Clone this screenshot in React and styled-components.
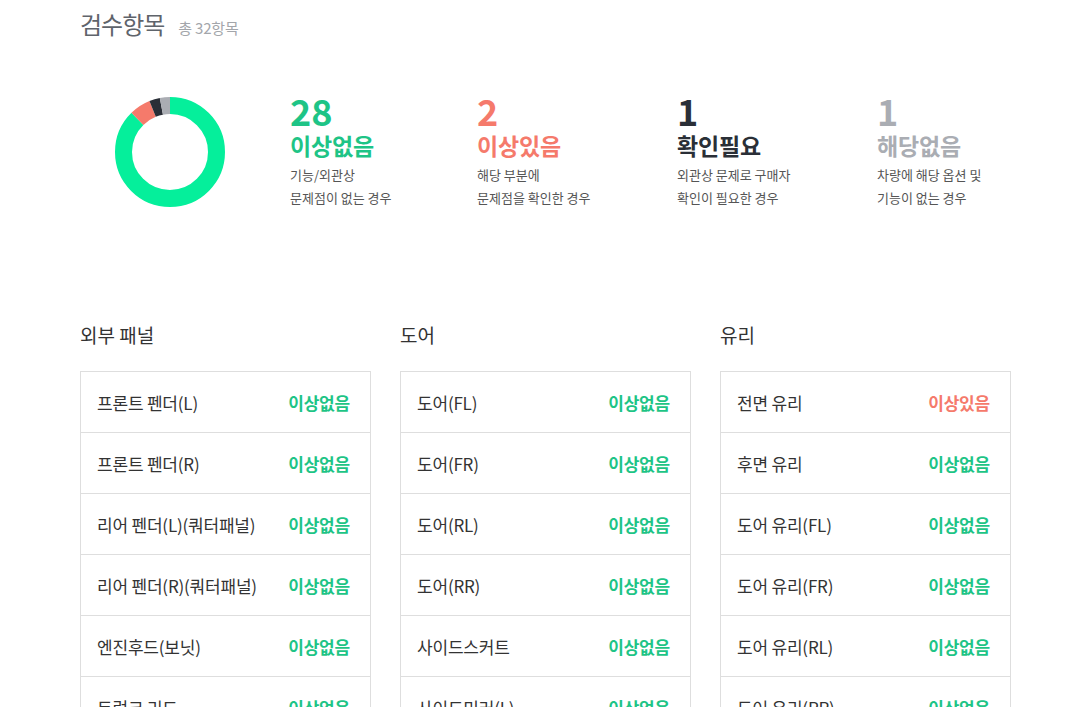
import React from "react";
import styled, { createGlobalStyle } from "styled-components";

const Global = createGlobalStyle`
  html, body { margin: 0; padding: 0; background: #fff; }
  body { font-family: "Noto Sans CJK KR", "Noto Sans", sans-serif; color: #333; }
`;

const C = {
  green: "#1ec486",
  donutGreen: "#05ef9b",
  coral: "#f57a6b",
  dark: "#2a2f37",
  grey: "#aaadb3",
};

const Page = styled.div`
  width: 931px;
  padding: 5px 0 0 80px;
`;

const TitleRow = styled.div`
  display: flex;
  align-items: baseline;
  gap: 14px;
  height: 38px;
`;

const Title = styled.h2`
  margin: 0;
  font-size: 24px;
  font-weight: 400;
  line-height: 38px;
  color: #5f646b;
  letter-spacing: -1px;
`;

const Count = styled.span`
  font-size: 15px;
  color: #a3a6ab;
  letter-spacing: -0.2px;
`;

const Summary = styled.div`
  display: grid;
  grid-template-columns: 210px 187px 200px 200px 200px;
  margin-top: 50px;
  height: 114px;
`;

const DonutWrap = styled.div`
  padding: 4px 0 0 35px;
`;

const Stat = styled.div`
  display: flex;
  flex-direction: column;
`;

const StatNum = styled.div`
  font-size: 36px;
  font-weight: 700;
  line-height: 36px;
  margin-top: -1px;
  color: ${(p) => p.$color};
`;

const StatLabel = styled.div`
  font-size: 23px;
  font-weight: 700;
  line-height: 30px;
  margin-top: 2px;
  letter-spacing: -0.2px;
  color: ${(p) => p.$color};
`;

const StatDesc = styled.div`
  font-size: 13px;
  line-height: 23px;
  margin-top: 3px;
  color: #555;
`;

const Sections = styled.div`
  display: grid;
  grid-template-columns: repeat(3, 291px);
  column-gap: 29px;
  margin-top: 117px;
`;

const Section = styled.section``;

const SectionTitle = styled.h3`
  margin: 0;
  height: 47px;
  font-size: 19px;
  font-weight: 400;
  line-height: 22px;
  color: #333;
`;

const Table = styled.div`
  border: 1px solid #dedede;
`;

const Row = styled.div`
  display: flex;
  align-items: center;
  justify-content: space-between;
  height: 60px;
  padding: 0 20px 0 16px;
  border-top: ${(p) => (p.$first ? "none" : "1px solid #dedede")};
`;

const RowName = styled.span`
  font-size: 17px;
  color: #333;
  letter-spacing: -0.2px;
`;

const RowStatus = styled.span`
  font-size: 17px;
  font-weight: 700;
  letter-spacing: -0.2px;
  color: ${(p) => p.$color};
`;

const stats = [
  { n: 28, label: "이상없음", color: C.green, ring: C.donutGreen, desc: ["기능/외관상", "문제점이 없는 경우"] },
  { n: 2, label: "이상있음", color: C.coral, ring: C.coral, desc: ["해당 부분에", "문제점을 확인한 경우"] },
  { n: 1, label: "확인필요", color: C.dark, ring: C.dark, desc: ["외관상 문제로 구매자", "확인이 필요한 경우"] },
  { n: 1, label: "해당없음", color: C.grey, ring: C.grey, desc: ["차량에 해당 옵션 및", "기능이 없는 경우"] },
];

const sections = [
  {
    title: "외부 패널",
    rows: [
      ["프론트 펜더(L)", 0],
      ["프론트 펜더(R)", 0],
      ["리어 펜더(L)(쿼터패널)", 0],
      ["리어 펜더(R)(쿼터패널)", 0],
      ["엔진후드(보닛)", 0],
      ["트렁크 리드", 0],
    ],
  },
  {
    title: "도어",
    rows: [
      ["도어(FL)", 0],
      ["도어(FR)", 0],
      ["도어(RL)", 0],
      ["도어(RR)", 0],
      ["사이드스커트", 0],
      ["사이드미러(L)", 0],
    ],
  },
  {
    title: "유리",
    rows: [
      ["전면 유리", 1],
      ["후면 유리", 0],
      ["도어 유리(FL)", 0],
      ["도어 유리(FR)", 0],
      ["도어 유리(RL)", 0],
      ["도어 유리(RR)", 0],
    ],
  },
];

function Donut() {
  const total = stats.reduce((a, s) => a + s.n, 0);
  const r = 46.5;
  const circ = 2 * Math.PI * r;
  let offset = 0;
  return (
    <svg width="110" height="110" viewBox="0 0 110 110">
      <g transform="rotate(-90 55 55)">
        {stats.map((s, i) => {
          const len = (s.n / total) * circ;
          const el = (
            <circle
              key={i}
              cx="55"
              cy="55"
              r={r}
              fill="none"
              stroke={s.ring}
              strokeWidth="17"
              strokeDasharray={`${len} ${circ - len}`}
              strokeDashoffset={-offset}
            />
          );
          offset += len;
          return el;
        })}
      </g>
    </svg>
  );
}

export default function App() {
  return (
    <>
      <Global />
      <Page>
        <TitleRow>
          <Title>검수항목</Title>
          <Count>총 32항목</Count>
        </TitleRow>
        <Summary>
          <DonutWrap>
            <Donut />
          </DonutWrap>
          {stats.map((s) => (
            <Stat key={s.label}>
              <StatNum $color={s.color}>{s.n}</StatNum>
              <StatLabel $color={s.color}>{s.label}</StatLabel>
              <StatDesc>
                {s.desc[0]}
                <br />
                {s.desc[1]}
              </StatDesc>
            </Stat>
          ))}
        </Summary>
        <Sections>
          {sections.map((sec) => (
            <Section key={sec.title}>
              <SectionTitle>{sec.title}</SectionTitle>
              <Table>
                {sec.rows.map(([name, st], i) => (
                  <Row key={name} $first={i === 0}>
                    <RowName>{name}</RowName>
                    <RowStatus $color={st ? C.coral : C.green}>
                      {st ? "이상있음" : "이상없음"}
                    </RowStatus>
                  </Row>
                ))}
              </Table>
            </Section>
          ))}
        </Sections>
      </Page>
    </>
  );
}
